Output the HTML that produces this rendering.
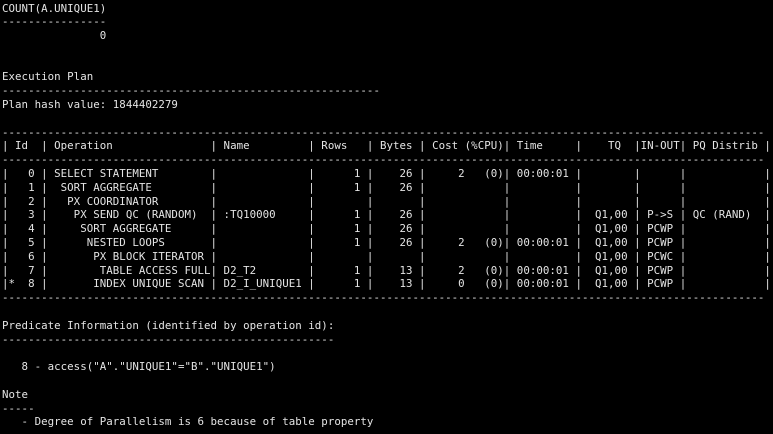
<!DOCTYPE html>
<html><head><meta charset="utf-8"><style>
html,body{margin:0;padding:0;background:#000;width:773px;height:434px;overflow:hidden}
pre{margin:0;padding:1.5px 0 0 2px;font-family:"DejaVu Sans Mono","Liberation Mono",monospace;font-size:10.78px;letter-spacing:0.035px;line-height:13.8px;color:#e4e4e4;white-space:pre}
</style></head><body><pre>COUNT(A.UNIQUE1)
----------------
               0


Execution Plan
----------------------------------------------------------
Plan hash value: 1844402279

---------------------------------------------------------------------------------------------------------------------
| Id  | Operation               | Name         | Rows   | Bytes | Cost (%CPU)| Time     |    TQ  |IN-OUT| PQ Distrib |
---------------------------------------------------------------------------------------------------------------------
|   0 | SELECT STATEMENT        |              |      1 |    26 |     2   (0)| 00:00:01 |        |      |            |
|   1 |  SORT AGGREGATE         |              |      1 |    26 |            |          |        |      |            |
|   2 |   PX COORDINATOR        |              |        |       |            |          |        |      |            |
|   3 |    PX SEND QC (RANDOM)  | :TQ10000     |      1 |    26 |            |          |  Q1,00 | P->S | QC (RAND)  |
|   4 |     SORT AGGREGATE      |              |      1 |    26 |            |          |  Q1,00 | PCWP |            |
|   5 |      NESTED LOOPS       |              |      1 |    26 |     2   (0)| 00:00:01 |  Q1,00 | PCWP |            |
|   6 |       PX BLOCK ITERATOR |              |        |       |            |          |  Q1,00 | PCWC |            |
|   7 |        TABLE ACCESS FULL| D2_T2        |      1 |    13 |     2   (0)| 00:00:01 |  Q1,00 | PCWP |            |
|*  8 |       INDEX UNIQUE SCAN | D2_I_UNIQUE1 |      1 |    13 |     0   (0)| 00:00:01 |  Q1,00 | PCWP |            |
---------------------------------------------------------------------------------------------------------------------

Predicate Information (identified by operation id):
---------------------------------------------------

   8 - access("A"."UNIQUE1"="B"."UNIQUE1")

Note
-----
   - Degree of Parallelism is 6 because of table property</pre></body></html>
